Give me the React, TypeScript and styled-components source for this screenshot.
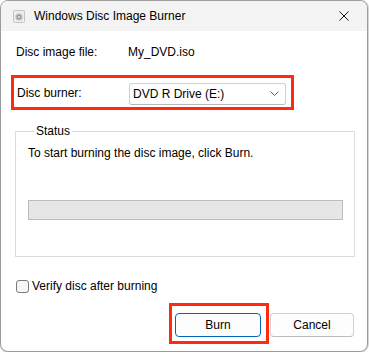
import styled, { createGlobalStyle } from "styled-components";

const GlobalStyle = createGlobalStyle`
  html, body {
    margin: 0;
    padding: 0;
    background: #ffffff;
  }
  body {
    font-family: "Segoe UI", "Liberation Sans", Arial, sans-serif;
    font-size: 12px;
    color: #000;
  }
`;

const Window = styled.div`
  width: 366px;
  height: 350px;
  margin: 0 1px 0 0;
  border: 1px solid #9c9c9c;
  border-radius: 8px;
  background: #ffffff;
  overflow: hidden;
  display: flex;
  flex-direction: column;
  box-shadow: 1px 0 0 #d6d6d6, 0 1px 0 #d6d6d6;
`;

const TitleBar = styled.div`
  height: 30px;
  background: #f3f3f3;
  display: flex;
  align-items: center;
  padding: 0 0 0 12px;
  flex-shrink: 0;
`;

const TitleText = styled.span`
  margin-left: 9px;
  flex: 1;
  font-size: 12px;
  color: #000;
`;

const CloseBox = styled.div`
  width: 46px;
  height: 30px;
  display: flex;
  align-items: center;
  justify-content: center;
`;

const Body = styled.div`
  flex: 1;
  display: flex;
  flex-direction: column;
  padding: 9px 13px 0 14px;
`;

const Row = styled.div`
  display: flex;
  align-items: center;
  height: 24px;
  padding-left: 1px;
`;

const Label = styled.span`
  width: 112px;
  flex-shrink: 0;
`;

const Highlight = styled.div`
  border: 3px solid #ff2a10;
`;

const FieldRow = styled(Highlight)`
  display: flex;
  align-items: center;
  height: 29px;
  width: 274px;
  margin: 11px 0 0 -4px;
  padding: 0 0 0 3px;
`;

const Select = styled.div`
  box-sizing: border-box;
  width: 157px;
  height: 22px;
  margin-top: 2px;
  border: 1px solid #d2d2d2;
  border-bottom-color: #b8b8b8;
  border-radius: 3px;
  background: #fff;
  display: flex;
  align-items: center;
  justify-content: space-between;
  padding: 0 6px 0 3px;
`;

const GroupBox = styled.fieldset`
  margin: 13px 0 0 0;
  width: 340px;
  box-sizing: border-box;
  border: 1px solid #dcdcdc;
  padding: 0 12px 36px 12px;
  min-inline-size: auto;
`;

const Legend = styled.legend`
  padding: 0 2px;
  margin-left: 6px;
  line-height: 16px;
`;

const StatusText = styled.div`
  margin-top: 6px;
  line-height: 16px;
`;

const Progress = styled.div`
  margin-top: 39px;
  height: 18px;
  width: 313px;
  background: #e6e6e6;
  border: 1px solid #bcbcbc;
`;

const CheckRow = styled.label`
  display: flex;
  align-items: center;
  margin-top: 21px;
  height: 16px;
  padding-left: 1px;
`;

const CheckBox = styled.span`
  width: 11px;
  height: 11px;
  border: 1px solid #7a7a7a;
  border-radius: 3px;
  background: #f6f6f6;
  margin-right: 3px;
`;

const ButtonRow = styled.div`
  display: flex;
  justify-content: flex-end;
  align-items: flex-start;
  margin-top: 9px;
`;

const BurnFrame = styled(Highlight)`
  padding: 7px 5px 4px 3px;
  margin-right: 1px;
`;

const Button = styled.button<{ $primary?: boolean }>`
  width: 86px;
  height: 24px;
  font-family: inherit;
  font-size: 12px;
  color: #000;
  background: #fdfdfd;
  border: 1px solid ${({ $primary }) => ($primary ? "#0067c0" : "#d0d0d0")};
  border-bottom-color: ${({ $primary }) => ($primary ? "#0067c0" : "#bcbcbc")};
  border-radius: 4px;
  padding: 0;
`;

const CancelButton = styled(Button)`
  margin-top: 10px;
  width: 84px;
`;

function DiscIcon() {
  return (
    <svg width="12" height="13" viewBox="0 0 12 13">
      <rect x="0.5" y="0.5" width="11" height="12" rx="1" fill="#eeeeee" stroke="#c4c4c4" />
      <circle cx="6" cy="7" r="3.6" fill="#b9bdb9" />
      <circle cx="6" cy="7" r="2.2" fill="#8fa08f" />
      <circle cx="6" cy="7" r="0.9" fill="#f2f2f2" />
    </svg>
  );
}

export default function App() {
  return (
    <>
      <GlobalStyle />
      <Window>
        <TitleBar>
          <DiscIcon />
          <TitleText>Windows Disc Image Burner</TitleText>
          <CloseBox>
            <svg width="10" height="10" viewBox="0 0 10 10">
              <path d="M0.5 0.5 L9.5 9.5 M9.5 0.5 L0.5 9.5" stroke="#1a1a1a" strokeWidth="1" />
            </svg>
          </CloseBox>
        </TitleBar>
        <Body>
          <Row>
            <Label>Disc image file:</Label>
            <span>My_DVD.iso</span>
          </Row>
          <FieldRow>
            <Label>Disc burner:</Label>
            <Select>
              <span>DVD R Drive (E:)</span>
              <svg width="9" height="5" viewBox="0 0 9 5">
                <path d="M0.5 0.5 L4.5 4.5 L8.5 0.5" fill="none" stroke="#606060" strokeWidth="1" />
              </svg>
            </Select>
          </FieldRow>
          <GroupBox>
            <Legend>Status</Legend>
            <StatusText>To start burning the disc image, click Burn.</StatusText>
            <Progress />
          </GroupBox>
          <CheckRow>
            <CheckBox />
            <span>Verify disc after burning</span>
          </CheckRow>
          <ButtonRow>
            <BurnFrame>
              <Button $primary>Burn</Button>
            </BurnFrame>
            <CancelButton>Cancel</CancelButton>
          </ButtonRow>
        </Body>
      </Window>
    </>
  );
}
